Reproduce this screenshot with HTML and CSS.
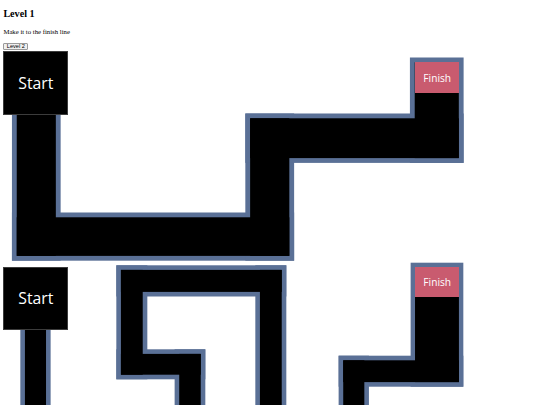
FILE: index.html
```html
<!DOCTYPE html>
<html>
<head>
<meta charset="utf-8">
<link rel="stylesheet" href="styles.css">
</head>
<body>
<h2 class="title">Level 1</h2>
<p class="lead">Make it to the finish line</p>
<button class="next">Level 2</button>

<div class="maze maze-one">
  <svg class="paths" width="532" height="210.2" viewBox="3.375 50.8 532 210.2">
    <g class="edge">
      <rect x="12.3" y="70" width="48.7" height="190.5"/>
      <rect x="12.3" y="212.3" width="282.2" height="48.2"/>
      <rect x="245.7" y="113.3" width="48.8" height="147.2"/>
      <rect x="245.7" y="113.3" width="218.3" height="49.4"/>
      <rect x="410.3" y="57.3" width="53.7" height="105.4"/>
    </g>
    <g class="fill">
      <rect x="17.1" y="74.8" width="39.1" height="180.9"/>
      <rect x="17.1" y="217.1" width="272.6" height="38.6"/>
      <rect x="250.5" y="118.1" width="39.2" height="137.6"/>
      <rect x="250.5" y="118.1" width="208.7" height="39.8"/>
      <rect x="415.1" y="62.1" width="44.1" height="95.8"/>
    </g>
  </svg>
  <div class="start">Start</div>
  <div class="finish finish-one">Finish</div>
</div>

<div class="maze maze-two">
  <svg class="paths" width="532" height="144" viewBox="3.375 261 532 144">
    <g class="edge">
      <rect x="20.7" y="300" width="30.3" height="120"/>
      <rect x="116.7" y="265.3" width="170" height="31.2"/>
      <rect x="255.7" y="265.3" width="31" height="150"/>
      <rect x="116.7" y="265.3" width="31" height="114"/>
      <rect x="116.7" y="349.3" width="89" height="30"/>
      <rect x="175" y="349.3" width="30.7" height="70"/>
      <rect x="411" y="262.7" width="52.7" height="124"/>
      <rect x="339" y="355.7" width="124.7" height="31"/>
      <rect x="339" y="355.7" width="30.3" height="70"/>
    </g>
    <g class="fill">
      <rect x="25.3" y="304.6" width="21.1" height="120"/>
      <rect x="121.3" y="269.9" width="160.8" height="22"/>
      <rect x="260.3" y="269.9" width="21.8" height="150"/>
      <rect x="121.3" y="269.9" width="21.8" height="104.8"/>
      <rect x="121.3" y="353.9" width="79.8" height="20.8"/>
      <rect x="179.6" y="353.9" width="21.5" height="70"/>
      <rect x="415.4" y="267.1" width="43.9" height="115"/>
      <rect x="343.6" y="360.3" width="115.7" height="21.8"/>
      <rect x="343.6" y="360.3" width="21.1" height="70"/>
    </g>
  </svg>
  <div class="start start-two">Start</div>
  <div class="finish finish-two">Finish</div>
</div>
</body>
</html>
```

FILE: styles.css
```css
html {
  overflow: hidden;
}

body {
  margin: 0 3.375px;
  padding-top: 0.1px;
  font-family: "Liberation Serif", "Times New Roman", serif;
  color: #000;
  background: #fff;
}

.title {
  font-size: 10.125px;
  line-height: 11.6px;
  font-weight: bold;
  margin: 8.3px 0 8.4px;
}

.lead {
  font-size: 6.75px;
  line-height: 7.8px;
  margin: 0 0 6.75px;
}

.next {
  display: block;
  box-sizing: border-box;
  height: 7.4px;
  margin: 0;
  padding: 0 2.4px;
  font-family: "Liberation Sans", Arial, sans-serif;
  font-size: 5.625px;
  line-height: 5.4px;
  color: #000;
  background: #efefef;
  border: 1px solid #9a9a9a;
  border-radius: 1px;
}

.maze {
  position: relative;
  width: 532px;
}

.maze-one {
  height: 210.2px;
  margin-top: 0.5px;
}

.maze-two {
  height: 144px;
}

.paths {
  display: block;
}

.edge rect {
  fill: #5a7096;
}

.fill rect {
  fill: #000;
}

.start {
  position: absolute;
  left: 0;
  top: 0;
  box-sizing: border-box;
  width: 65px;
  height: 64px;
  background: #000;
  border: 1px solid #3c3c3c;
  color: #fff;
  font-family: "Open Sans", "Noto Sans", sans-serif;
  font-size: 15.8px;
  display: flex;
  align-items: center;
  justify-content: center;
}

.start-two {
  top: 5.8px;
  height: 63.4px;
}

.finish {
  position: absolute;
  left: 411.8px;
  width: 44.1px;
  height: 30.4px;
  background: #c95b6f;
  color: #fff;
  font-family: "Open Sans", "Noto Sans", sans-serif;
  font-size: 10.2px;
  display: flex;
  align-items: center;
  justify-content: center;
}

.finish-one {
  top: 11.5px;
}

.finish-two {
  top: 6.3px;
  height: 30px;
}
```
